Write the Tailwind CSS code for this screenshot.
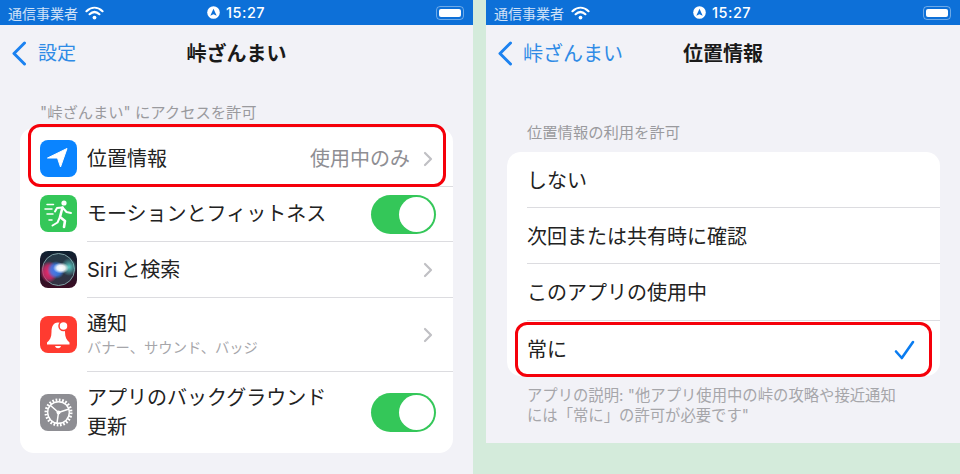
<!DOCTYPE html>
<html lang="ja">
<head>
  <meta charset="UTF-8">
  <title>位置情報</title>
  <script src="https://cdn.jsdelivr.net/npm/@tailwindcss/browser@4"></script>
</head>
<body class="bg-[#d4ebdb] overflow-hidden font-['Inter','Noto_Sans_CJK_JP',sans-serif]">
<div class="flex w-[960px] h-[474px] items-start">

  <!-- Left phone -->
  <div class="w-[473px] h-[474px] bg-[#f2f2f7] shrink-0">
    <!-- Status bar -->
    <div class="relative flex items-center h-[25px] bg-[#0d70d8] text-white pl-2 pr-[9px] pt-[2px]">
      <span class="text-[14px] leading-none text-white/80">通信事業者</span>
      <svg class="ml-[7px] -mt-[2px]" width="19" height="14" viewBox="0 0 19 14" fill="none" stroke="white" stroke-linecap="round">
        <path d="M1.5 5.2C6.4.6 12.6.6 17.5 5.2" stroke-width="2.2"/>
        <path d="M4.6 8.2c3-2.7 6.8-2.7 9.8 0" stroke-width="2.2"/>
        <circle cx="9.5" cy="11.6" r="1.9" fill="white" stroke="none"/>
      </svg>
      <div class="absolute left-[207px] top-0 h-[25px] flex items-center gap-[6px]">
        <svg width="13" height="13" viewBox="0 0 13 13"><circle cx="6.5" cy="6.5" r="6.3" fill="white"/><path d="M6.5 2.8 9.7 9.8 6.5 8.2 3.3 9.8Z" fill="#0d70d8"/></svg>
        <span class="text-[14.5px] leading-none font-medium tracking-[.5px] pt-[2px]">15:27</span>
      </div>
      <div class="ml-auto flex items-center -mt-[2px]">
        <div class="w-[28px] h-[14px] rounded-[4px] border border-white/40 p-[2px]"><div class="w-full h-full bg-white rounded-[2px]"></div></div>
      </div>
    </div>

    <!-- Nav -->
    <div class="relative flex items-center h-[57px] pl-3">
      <svg width="15" height="25" viewBox="0 0 15 25" fill="none" stroke="#1c82f0" stroke-width="3" stroke-linecap="round" stroke-linejoin="round"><path d="M12.5 2 2 12.500l10.500 10.500"/></svg>
      <span class="ml-[11px] text-[19px] leading-none text-[#2f8be6]">設定</span>
      <span class="absolute inset-x-0 text-center text-[20px] leading-none font-bold text-[#1a1a1a]">峠ざんまい</span>
    </div>

    <div class="pl-[40px] pt-[22px] h-[46px] text-[15.300px] leading-[18px] text-[#9a9a9e]">"峠ざんまい" にアクセスを許可</div>

    <!-- Card -->
    <div class="relative mx-5 w-[433px] h-[325px] bg-white rounded-[14px] text-[20px] leading-none text-[#222]">
      <div class="flex items-center h-[58px] pl-5 pr-[20px] pt-[3px]">
        <div class="w-[37px] h-[37px] rounded-[8px] bg-[#0a84ff] shrink-0">
          <svg width="37" height="37" viewBox="0 0 37 37"><path d="M7.500 18 27 8.500 20.500 27 17.500 18Z" fill="white" stroke="white" stroke-width="1" stroke-linejoin="round"/></svg>
        </div>
        <span class="ml-[10px]">位置情報</span>
        <span class="ml-auto text-[#8e8e93]">使用中のみ</span>
        <svg class="ml-[13px]" width="10" height="16" viewBox="0 0 10 16" fill="none" stroke="#c0c0c4" stroke-width="2.2" stroke-linecap="round" stroke-linejoin="round"><path d="M2 2l6 6-6 6"/></svg>
      </div>

      <div class="flex items-center h-[55px] pl-5 pr-[17px]">
        <div class="w-[37px] h-[37px] rounded-[8px] bg-[#34c759] shrink-0">
          <svg width="37" height="37" viewBox="0 0 37 37" fill="none" stroke="white" stroke-linecap="round" stroke-linejoin="round">
            <circle cx="24" cy="8" r="2.600" fill="white" stroke="none"/>
            <path d="M22.500 12.500 20 22l5 4-1 6" stroke-width="2.600"/>
            <path d="M22.500 12.500l4 4.500 4.500 1M22.500 12.500 17 13l-2 3.500M19.500 23l-2 4.500-5 3" stroke-width="2"/>
            <path d="M7 9.500h6.500M5 14h7M7 19h6M9 25h3" stroke-width="1.500"/>
          </svg>
        </div>
        <div class="flex-1 ml-[10px] h-full flex items-center border-t border-[#dcdce0] -mr-[17px] pr-[17px]">
          <span>モーションとフィットネス</span>
          <div class="ml-auto w-[65px] h-[39px] rounded-full bg-[#34c759] p-[2px] flex justify-end">
            <div class="w-[35px] h-[35px] rounded-full bg-white"></div>
          </div>
        </div>
      </div>

      <div class="flex items-center h-[56px] pl-5 pr-[20px]">
        <div class="w-[37px] h-[37px] rounded-[8px] overflow-hidden shrink-0">
          <svg width="37" height="37" viewBox="0 0 37 37">
            <defs>
              <linearGradient id="siriBg" x1="0" y1="0" x2="0" y2="1"><stop offset="0" stop-color="#0e2030"/><stop offset="1" stop-color="#3a0e24"/></linearGradient>
              <radialGradient id="siriRed"><stop offset="0" stop-color="#f02a6a"/><stop offset=".6" stop-color="#d8286a" stop-opacity=".8"/><stop offset="1" stop-color="#e0306a" stop-opacity="0"/></radialGradient>
              <radialGradient id="siriBlue"><stop offset="0" stop-color="#3a80f0"/><stop offset=".6" stop-color="#3a80f0" stop-opacity=".8"/><stop offset="1" stop-color="#3a80e8" stop-opacity="0"/></radialGradient>
              <radialGradient id="siriTeal"><stop offset="0" stop-color="#5cd0c8"/><stop offset="1" stop-color="#5cd0c8" stop-opacity="0"/></radialGradient>
              <radialGradient id="siriWhite"><stop offset="0" stop-color="#ffffff"/><stop offset=".5" stop-color="#ffffff" stop-opacity=".9"/><stop offset="1" stop-color="#ffffff" stop-opacity="0"/></radialGradient>
            </defs>
            <rect width="37" height="37" fill="url(#siriBg)"/>
            <circle cx="18.500" cy="18.500" r="16" fill="#33505c" fill-opacity=".55" stroke="#7fa0a4" stroke-width="1"/>
            <ellipse cx="9" cy="21" rx="9" ry="11" fill="url(#siriRed)"/>
            <ellipse cx="29" cy="16" rx="8" ry="9" fill="url(#siriTeal)"/>
            <ellipse cx="16" cy="19" rx="9" ry="9" fill="url(#siriBlue)"/>
            <ellipse cx="21" cy="17" rx="8" ry="5.500" fill="url(#siriWhite)"/>
          </svg>
        </div>
        <div class="flex-1 ml-[10px] h-full flex items-center border-t border-[#dcdce0] -mr-[20px] pr-[20px]">
          <span>Siri<span class="ml-[3px]">と検索</span></span>
          <svg class="ml-auto" width="10" height="16" viewBox="0 0 10 16" fill="none" stroke="#c0c0c4" stroke-width="2.2" stroke-linecap="round" stroke-linejoin="round"><path d="M2 2l6 6-6 6"/></svg>
        </div>
      </div>

      <div class="flex items-center h-[74px] pl-5 pr-[20px]">
        <div class="w-[37px] h-[37px] rounded-[8px] bg-[#ff3b30] shrink-0">
          <svg width="37" height="37" viewBox="0 0 37 37" fill="white">
            <path d="M18 6.500C13 6.500 11.500 11 11.500 16 11.500 21 10 24 7 26.500V28.500H29.500V26.500C26.500 24 25 21 25 16 25 11 23 6.500 18 6.500Z"/>
            <circle cx="23.500" cy="10" r="4.500" stroke="#ff3b30" stroke-width="1.500"/>
            <path d="M15 30h6c-.5 1.500-1.500 2.200-3 2.200s-2.500-.7-3-2.200Z"/>
          </svg>
        </div>
        <div class="flex-1 ml-[10px] h-full flex flex-col justify-center border-t border-[#dcdce0] -mr-[20px] pr-[20px] pt-[1px] relative">
          <span class="mb-[7px]">通知</span>
          <span class="text-[14.300px] leading-none text-[#a6a6aa]">バナー、サウンド、バッジ</span>
          <svg class="absolute right-[20px] top-[29px]" width="10" height="16" viewBox="0 0 10 16" fill="none" stroke="#c0c0c4" stroke-width="2.2" stroke-linecap="round" stroke-linejoin="round"><path d="M2 2l6 6-6 6"/></svg>
        </div>
      </div>

      <div class="flex items-center h-[82px] pl-5 pr-[17px]">
        <div class="w-[37px] h-[37px] rounded-[8px] bg-[#8e8e93] shrink-0">
          <svg width="37" height="37" viewBox="0 0 37 37" fill="none" stroke="white">
            <circle cx="18.500" cy="18.500" r="12.500" stroke-width="3" stroke-dasharray="1.700 1.570"/>
            <circle cx="18.500" cy="18.500" r="10.800" stroke-width="1.400"/>
            <path d="M18.500 18.500 29 15M18.500 18.500 10 11M18.500 18.500 17 29" stroke-width="1.500"/>
            <circle cx="18.500" cy="18.500" r="2" fill="white" stroke="none"/>
          </svg>
        </div>
        <div class="flex-1 ml-[10px] h-full flex items-center border-t border-[#dcdce0] -mr-[17px] pr-[17px]">
          <span class="leading-[29px]">アプリのバックグラウンド<br>更新</span>
          <div class="ml-auto w-[65px] h-[39px] rounded-full bg-[#34c759] p-[2px] flex justify-end">
            <div class="w-[35px] h-[35px] rounded-full bg-white"></div>
          </div>
        </div>
      </div>

      <!-- Highlight -->
      <div class="absolute left-2 -top-[4px] w-[418px] h-[63px] border-[3px] border-[#f5000a] rounded-[12px]"></div>
    </div>
  </div>

  <!-- Right phone -->
  <div class="ml-[13px] w-[474px] h-[443px] bg-[#f2f2f7] shrink-0">
    <!-- Status bar -->
    <div class="relative flex items-center h-[25px] bg-[#0d70d8] text-white pl-2 pr-[9px] pt-[2px]">
      <span class="text-[14px] leading-none text-white/80">通信事業者</span>
      <svg class="ml-[7px] -mt-[2px]" width="19" height="14" viewBox="0 0 19 14" fill="none" stroke="white" stroke-linecap="round">
        <path d="M1.5 5.2C6.4.6 12.6.6 17.5 5.2" stroke-width="2.2"/>
        <path d="M4.6 8.2c3-2.7 6.8-2.7 9.8 0" stroke-width="2.2"/>
        <circle cx="9.5" cy="11.6" r="1.9" fill="white" stroke="none"/>
      </svg>
      <div class="absolute left-[207px] top-0 h-[25px] flex items-center gap-[6px]">
        <svg width="13" height="13" viewBox="0 0 13 13"><circle cx="6.5" cy="6.5" r="6.3" fill="white"/><path d="M6.5 2.8 9.7 9.8 6.5 8.2 3.3 9.8Z" fill="#0d70d8"/></svg>
        <span class="text-[14.5px] leading-none font-medium tracking-[.5px] pt-[2px]">15:27</span>
      </div>
      <div class="ml-auto flex items-center -mt-[2px]">
        <div class="w-[28px] h-[14px] rounded-[4px] border border-white/40 p-[2px]"><div class="w-full h-full bg-white rounded-[2px]"></div></div>
      </div>
    </div>

    <!-- Nav -->
    <div class="relative flex items-center h-[57px] pl-3">
      <svg width="15" height="25" viewBox="0 0 15 25" fill="none" stroke="#1c82f0" stroke-width="3" stroke-linecap="round" stroke-linejoin="round"><path d="M12.5 2 2 12.500l10.500 10.500"/></svg>
      <span class="ml-[10px] text-[20px] leading-none text-[#2f8be6]">峠ざんまい</span>
      <span class="absolute inset-x-0 text-center text-[20px] leading-none font-bold text-[#1a1a1a]">位置情報</span>
    </div>

    <div class="pl-[41px] pt-[42px] h-[70px] text-[15.300px] leading-[18px] text-[#9a9a9e]">位置情報の利用を許可</div>

    <!-- Card -->
    <div class="relative mx-[21px] w-[433px] bg-white rounded-[14px] text-[20px] leading-none text-[#222]">
      <div class="flex items-center h-[55px] pl-5 pt-[2px]">しない</div>
      <div class="ml-5 h-[56px] flex items-center border-t border-[#dcdce0] pt-[2px]">次回または共有時に確認</div>
      <div class="ml-5 h-[57px] flex items-center border-t border-[#dcdce0] pt-[2px]">このアプリの使用中</div>
      <div class="ml-5 h-[56px] flex items-center justify-between pr-[25px] pt-[3px] border-t border-[#dcdce0]">
        <span>常に</span>
        <svg width="21" height="20" viewBox="0 0 21 20" fill="none" stroke="#0a7cf0" stroke-width="2.600" stroke-linecap="round" stroke-linejoin="round"><path d="M2 11.500 7.800 18 19 2"/></svg>
      </div>
      <!-- Highlight -->
      <div class="absolute left-2 top-[170px] w-[417px] h-[55px] border-[3px] border-[#f5000a] rounded-[12px]"></div>
    </div>

    <p class="pl-[41px] pt-[10px] text-[15.350px] leading-[20px] text-[#a6a6aa]">アプリの説明: "他アプリ使用中の峠の攻略や接近通知<br>には「常に」の許可が必要です"</p>
  </div>
</div>
</body>
</html>
